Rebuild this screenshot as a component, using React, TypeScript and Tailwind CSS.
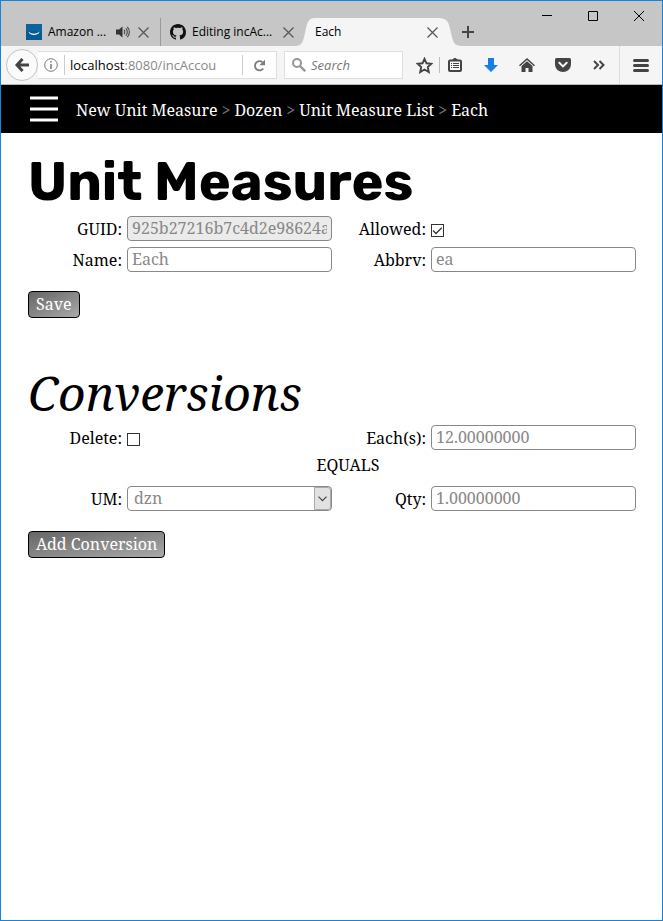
import type { InputHTMLAttributes, ReactNode } from "react";

function CloseIcon() {
  return (
    <svg width="11" height="11" viewBox="0 0 11 11" fill="none" stroke="#555" strokeWidth="1.2">
      <path d="M.5.5l10 10M10.5.5l-10 10" />
    </svg>
  );
}

function Octocat() {
  return (
    <svg className="shrink-0" width="16" height="16" viewBox="0 0 16 16" fill="#111">
      <path d="M8 0C3.58 0 0 3.58 0 8c0 3.54 2.29 6.53 5.47 7.59.4.07.55-.17.55-.38 0-.19-.01-.82-.01-1.49-2.01.37-2.53-.49-2.69-.94-.09-.23-.48-.94-.82-1.13-.28-.15-.68-.52-.01-.53.63-.01 1.08.58 1.23.82.72 1.21 1.87.87 2.33.66.07-.52.28-.87.51-1.07-1.78-.2-3.64-.89-3.64-3.95 0-.87.31-1.59.82-2.15-.08-.2-.36-1.02.08-2.12 0 0 .67-.21 2.2.82.64-.18 1.32-.27 2-.27s1.36.09 2 .27c1.53-1.04 2.2-.82 2.2-.82.44 1.1.16 1.92.08 2.12.51.56.82 1.27.82 2.15 0 3.07-1.87 3.75-3.65 3.95.29.25.54.73.54 1.48 0 1.07-.01 1.93-.01 2.2 0 .21.15.46.55.38A8.01 8.01 0 0 0 16 8c0-4.42-3.58-8-8-8z" />
    </svg>
  );
}

function TitleBar() {
  return (
    <header className="flex h-[45px] items-end bg-[#c6c6c6] text-[12px] leading-4">
      <div className="flex h-7 w-40 items-center border-r border-[#999] pr-[11px] pl-[25px]">
        <svg className="shrink-0" width="16" height="16" viewBox="0 0 16 16">
          <rect width="16" height="16" fill="#075a93" />
          <path d="M0 0h16v7H0z" fill="#0a659f" />
          <path d="M2.500 7.500c3 3 8 3 11 0l-.5 1.500c-2.500 2.500-7.500 2.500-10 0z" fill="#fff" />
        </svg>
        <span className="ml-1.5 whitespace-nowrap">Amazon ...</span>
        <button aria-label="Mute tab" className="ml-auto">
          <svg width="14" height="12" viewBox="0 0 14 12" fill="none" stroke="#444" strokeWidth="1.1">
            <path d="M0 3.500h3L6.500.5v11L3 8.500H0z" fill="#333" stroke="none" />
            <path d="M8 4c1 1 1 3 0 4M9.800 2.300c2 2 2 5.400 0 7.400M11.300.8c2.700 3 2.700 7.400 0 10.400" />
          </svg>
        </button>
        <button aria-label="Close Amazon tab" className="ml-2">
          <CloseIcon />
        </button>
      </div>
      <div className="flex h-7 w-[134px] items-center pr-px pl-[9px]">
        <Octocat />
        <span className="ml-1.5 whitespace-nowrap">Editing incAc...</span>
        <button aria-label="Close Editing tab" className="ml-auto">
          <CloseIcon />
        </button>
      </div>
      <div className="flex h-7">
        <svg width="20" height="28" viewBox="0 0 20 28" fill="#f5f5f5">
          <path d="M0 28C7 28 8 24 10 15C12 5 13 0 20 0V28z" />
        </svg>
        <div className="flex w-[123px] items-center justify-between bg-[#f5f5f5]">
          <span>Each</span>
          <button aria-label="Close Each tab">
            <CloseIcon />
          </button>
        </div>
        <svg width="24" height="28" viewBox="0 0 24 28" fill="#f5f5f5">
          <path d="M24 28C16 28 15 24 13 15C11 5 10 0 0 0V28z" />
        </svg>
      </div>
      <button aria-label="New tab" className="mb-2">
        <svg width="12" height="12" viewBox="0 0 12 12" stroke="#444" strokeWidth="2">
          <path d="M6 0v12M0 6h12" />
        </svg>
      </button>
      <div className="ml-auto flex self-start">
        <button aria-label="Minimize" className="flex h-[30px] w-[46px] items-center justify-center">
          <svg width="10" height="10" viewBox="0 0 10 10" stroke="#000">
            <path d="M0 4.500h10" />
          </svg>
        </button>
        <button aria-label="Maximize" className="flex h-[30px] w-[46px] items-center justify-center">
          <svg width="10" height="10" viewBox="0 0 10 10" stroke="#000" fill="none">
            <path d="M.5.5h9v9h-9z" />
          </svg>
        </button>
        <button aria-label="Close window" className="flex h-[30px] w-[46px] items-center justify-center">
          <svg width="10" height="10" viewBox="0 0 10 10" stroke="#000" fill="none">
            <path d="M0 0l10 10M10 0L0 10" />
          </svg>
        </button>
      </div>
    </header>
  );
}

function ToolButton({ label, children }: { label: string; children: ReactNode }) {
  return (
    <button aria-label={label} className="flex h-8 w-9 shrink-0 items-center justify-center">
      {children}
    </button>
  );
}

function Toolbar() {
  return (
    <nav className="flex h-[39px] items-center border-b border-[#b6b6b6] bg-[#f5f5f5] pl-[5px]">
      <button
        aria-label="Back"
        className="flex size-8 shrink-0 items-center justify-center rounded-full border border-[#c4c4c4] bg-[#fbfbfb]"
      >
        <svg width="14" height="14" viewBox="0 0 14 14" fill="none" stroke="#444" strokeWidth="3">
          <path d="M7.500 1L2 7l5.500 6M2.500 7H14" />
        </svg>
      </button>
      <div className="flex h-7 flex-1 items-center border border-l-0 border-[#dedede] bg-white">
        <button aria-label="Site information" className="ml-1.5">
          <svg width="14" height="14" viewBox="0 0 14 14" fill="none" stroke="#777">
            <circle cx="7" cy="7" r="6.300" />
            <path d="M7 6v5M7 3v1.600" strokeWidth="1.500" />
          </svg>
        </button>
        <span className="ml-1.5 h-5 w-px bg-[#ccc]" />
        <div className="ml-[5px] flex-1 overflow-hidden pt-0.5 text-[13px] whitespace-nowrap text-[#888]">
          <span className="text-black">localhost</span>:8080/incAccou
        </div>
        <button aria-label="Reload" className="flex h-5 w-[34px] items-center justify-center border-l border-[#ccc]">
          <svg width="13" height="13" viewBox="0 0 13 13" fill="none" stroke="#7c7c7c" strokeWidth="1.800">
            <path d="M10.300 9.500A4.600 4.600 0 1 1 9.500 3.200" />
            <path d="M12 .7v5.600H6.400z" fill="#7c7c7c" stroke="none" />
          </svg>
        </button>
      </div>
      <div className="ml-[7px] flex h-7 w-[119px] shrink-0 items-center border border-[#dedede] bg-white pl-[7px]">
        <svg className="shrink-0" width="14" height="14" viewBox="0 0 14 14" fill="none" stroke="#969696" strokeWidth="2">
          <circle cx="5" cy="5" r="4" />
          <path d="M8 8l5.200 5.200" strokeWidth="2.400" />
        </svg>
        <input
          aria-label="Search the web"
          placeholder="Search"
          className="ml-[5px] w-full min-w-0 pt-0.5 text-[13px] outline-none placeholder:text-[#777] placeholder:italic"
        />
      </div>
      <div className="ml-[3px] flex items-center">
        <ToolButton label="Bookmark this page">
          <svg width="17" height="17" viewBox="0 0 17 17" fill="none" stroke="#444" strokeWidth="1.900">
            <path d="M8.500 1.800l2 4.500 4.900.5-3.600 3.300 1 4.900-4.300-2.500-4.300 2.500 1-4.900L1.600 6.800l4.900-.5z" />
          </svg>
        </ToolButton>
        <span className="-ml-[3px] h-4 w-px bg-[#bbb]" />
        <span className="-ml-[3px] flex">
          <ToolButton label="Bookmarks">
            <svg width="14" height="14" viewBox="0 0 14 14" fill="none" stroke="#444">
              <path d="M4.500 2L7 0l2.500 2z" fill="#444" />
              <rect x="1" y="2.500" width="12" height="10.500" rx="1" strokeWidth="2" />
              <path d="M3 5.500h1M5 5.500h6M3 7.500h1M5 7.500h6M3 9.500h1M5 9.500h6" />
            </svg>
          </ToolButton>
          <ToolButton label="Downloads">
            <svg width="14" height="14" viewBox="0 0 14 14" fill="#177ee6">
              <path d="M4 0h6v7h4l-7 7-7-7h4z" />
            </svg>
          </ToolButton>
          <ToolButton label="Home">
            <svg width="16" height="14" viewBox="0 0 16 14" fill="#444">
              <path d="M8 0l8 7.200-1 1L8 2 1 8.200l-1-1zM8 3.200l5.500 4.900V14H9.500v-4h-3v4h-4V8.100z" />
            </svg>
          </ToolButton>
          <ToolButton label="Save to Pocket">
            <svg width="16" height="14" viewBox="0 0 16 14">
              <path d="M1.500 0h13Q16 0 16 1.500V6c0 10.600-16 10.600-16 0V1.500Q0 0 1.500 0z" fill="#444" />
              <path d="M4.300 4.800L8 8.400l3.700-3.600" fill="none" stroke="#f5f5f5" strokeWidth="2" strokeLinecap="round" />
            </svg>
          </ToolButton>
          <ToolButton label="More tools">
            <svg width="12" height="10" viewBox="0 0 12 10" fill="none" stroke="#444" strokeWidth="2">
              <path d="M1 1l4 4-4 4M6.500 1l4 4-4 4" />
            </svg>
          </ToolButton>
        </span>
        <span className="ml-0.5 h-[38px] w-px bg-[#ddd]" />
        <button aria-label="Open menu" className="flex h-8 w-[42px] items-center justify-center">
          <svg width="16" height="13" viewBox="0 0 16 13" stroke="#444" strokeWidth="3" strokeLinecap="round">
            <path d="M1.500 1.500h13M1.500 6.500h13M1.500 11.500h13" />
          </svg>
        </button>
      </div>
    </nav>
  );
}

const crumbs = ["New Unit Measure", "Dozen", "Unit Measure List", "Each"];

function Breadcrumbs() {
  return (
    <nav className="flex h-12 items-center bg-black pl-[29px] text-white">
      <button aria-label="Menu" className="mr-[18px]">
        <svg width="28" height="26" viewBox="0 0 28 26" stroke="#fff" strokeWidth="3">
          <path d="M0 2h28M0 13h28M0 24h28" />
        </svg>
      </button>
      <ol className="flex gap-1 pt-0.5 whitespace-nowrap">
        {crumbs.map((crumb, i) => (
          <li key={crumb} className="flex gap-1">
            {i > 0 && <span className="text-[#777]">&gt;</span>}
            <a href="#">{crumb}</a>
          </li>
        ))}
      </ol>
    </nav>
  );
}

function Field({ id, label, children }: { id: string; label: string; children: ReactNode }) {
  return (
    <div className="flex h-[25px] items-center gap-[5px]">
      <label htmlFor={id} className="w-[94px] shrink-0 text-right">
        {label}
      </label>
      {children}
    </div>
  );
}

function TextBox(props: InputHTMLAttributes<HTMLInputElement>) {
  return (
    <input
      {...props}
      className="h-[25px] w-full min-w-0 rounded-[4px] border border-[#888] bg-white px-1 pb-0.5 text-[#888] read-only:bg-[#ebebeb]"
    />
  );
}

function CheckBox({ id, checked }: { id: string; checked?: boolean }) {
  return (
    <span className="relative mt-1 flex">
      <input
        id={id}
        type="checkbox"
        defaultChecked={checked}
        className="peer size-[13px] appearance-none border border-[#333] bg-white"
      />
      <svg
        className="pointer-events-none absolute inset-0 hidden peer-checked:block"
        width="13"
        height="13"
        viewBox="0 0 13 13"
        fill="none"
        stroke="#333"
        strokeWidth="1.300"
      >
        <path d="M2 6.500l3 3 5.700-5.700" />
      </svg>
    </span>
  );
}

function ActionButton({ children }: { children: ReactNode }) {
  return (
    <button className="flex h-[27px] items-center rounded-[4px] border border-black bg-linear-to-br from-[#666] to-[#aaa] px-[7px] pb-0.5 text-white">
      {children}
    </button>
  );
}

export default function App() {
  return (
    <div className="flex min-h-screen flex-col border border-[#1883d7] bg-white font-['Open_Sans','Noto_Sans',sans-serif] text-black">
      <TitleBar />
      <Toolbar />
      <div className="font-['Noto_Serif','DejaVu_Serif_Condensed','DejaVu_Serif',serif] text-[16px] leading-5">
        <Breadcrumbs />
        <main className="pt-[19px] pr-[26px] pl-[27px]">
          <h1 className="font-['Rubik','Inter',sans-serif] text-[54px] leading-[60px] font-bold">Unit Measures</h1>
          <form className="mt-1">
            <div className="grid grid-cols-2 gap-y-1.5">
              <Field id="guid" label="GUID:">
                <TextBox id="guid" readOnly defaultValue="925b27216b7c4d2e98624a" />
              </Field>
              <Field id="allowed" label="Allowed:">
                <CheckBox id="allowed" checked />
              </Field>
              <Field id="name" label="Name:">
                <TextBox id="name" defaultValue="Each" />
              </Field>
              <Field id="abbrv" label="Abbrv:">
                <TextBox id="abbrv" defaultValue="ea" />
              </Field>
            </div>
            <div className="mt-[19px] flex">
              <ActionButton>Save</ActionButton>
            </div>
          </form>
          <h2 className="mt-[45px] text-[48px] leading-[60px] italic">Conversions</h2>
          <form className="mt-0.5">
            <div className="grid grid-cols-2">
              <Field id="delete" label="Delete:">
                <CheckBox id="delete" />
              </Field>
              <Field id="eachs" label="Each(s):">
                <TextBox id="eachs" defaultValue="12.00000000" />
              </Field>
            </div>
            <p className="mt-[5px] mb-[11px] pl-8 text-center">EQUALS</p>
            <div className="grid grid-cols-2">
              <Field id="um" label="UM:">
                <span className="relative flex w-full">
                  <select
                    id="um"
                    defaultValue="dzn"
                    className="h-[25px] w-full appearance-none rounded-[4px] border border-[#888] bg-white pb-0.5 pl-1.5 text-[#888]"
                  >
                    <option>dzn</option>
                  </select>
                  <span className="pointer-events-none absolute inset-y-px right-px flex w-[17px] items-center justify-center rounded-r-[3px] border border-[#aaa] bg-[#e1e1e1]">
                    <svg width="9" height="6" viewBox="0 0 9 6" fill="none" stroke="#444" strokeWidth="1.200">
                      <path d="M.5.7l4 4 4-4" />
                    </svg>
                  </span>
                </span>
              </Field>
              <Field id="qty" label="Qty:">
                <TextBox id="qty" defaultValue="1.00000000" />
              </Field>
            </div>
            <div className="mt-5 flex">
              <ActionButton>Add Conversion</ActionButton>
            </div>
          </form>
        </main>
      </div>
    </div>
  );
}
